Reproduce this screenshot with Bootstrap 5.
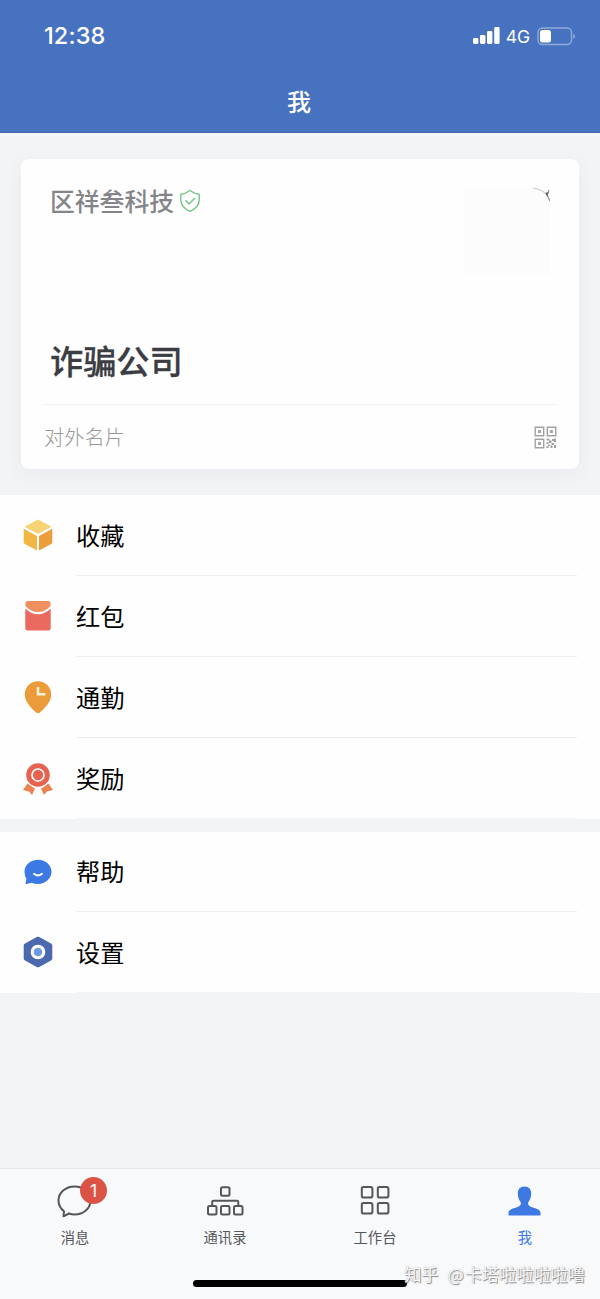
<!DOCTYPE html>
<html lang="zh-CN">
<head>
<meta charset="utf-8">
<meta name="viewport" content="width=device-width, initial-scale=1">
<title>我</title>
<link href="https://cdn.jsdelivr.net/npm/bootstrap@5.3.0/dist/css/bootstrap.min.css" rel="stylesheet">
<style>
body{font-family:"Noto Sans CJK SC",sans-serif;background:#f3f4f6;color:#000;line-height:1;width:600px}
svg{display:block;flex:none}
.screen{height:1299px}
.topbar{height:133px;background:#4772bf;color:#fff;border-bottom:1px solid #3f68b4}
.status{height:72px;padding:0 24px 0 44px}
.clock{font:500 23.5px/1 Inter,sans-serif;letter-spacing:.1px}
.carrier{font:400 17.5px/1 Inter,sans-serif;margin:1px 7px 0 6px}
.page-title{font-size:24px;font-weight:500;height:58px;padding-right:2px}
.profile{margin:26px 21px;height:310px;border:0;border-radius:8px;box-shadow:0 5px 20px rgba(60,80,110,.055);--bs-card-bg:#fefefe}
.profile-main{height:245px;padding:26px 29px 0 29px}
.company{font-size:24.8px;font-weight:500;color:#858589;line-height:30px}
.company svg{margin-top:2px}
.avatar{width:86px;height:87px;background:#fcfcfc;margin-top:2px}
.person{font-size:33.2px;font-weight:500;-webkit-text-stroke:.3px #3c3d43;color:#3c3d43;line-height:40px;padding-bottom:24px}
.visit{margin:0 22px;border-top:1px solid #f0f0f1;height:65px;color:#98989a;font-size:20.2px}
.visit span{padding-left:1px;font-weight:300}
.menu .list-group-item{height:81px;padding:0;border:0;display:flex;align-items:stretch;background:#fefefe;color:#000}
.menu .ico{width:76px;padding:0 0 1px 20.5px;display:flex;align-items:center}
.menu .lbl{flex:1;margin-right:23px;border-bottom:1px solid #ededee;display:flex;align-items:center;font-size:24.2px}
.menu .list-group-item:last-child .lbl{border-color:#f3f4f5}
.menu .list-group-item.short{height:80px}
.menu .short .lbl{padding-bottom:1px}
.tabs{height:131px;background:#f8f9fb;border-top:1px solid #e6e7e9}
.tab{width:150px;color:#56575a;font-size:14.3px;padding-top:14px;gap:10px}
.tab.active{color:#3d78e3}
.count{left:80px;top:8px;width:27px;height:27px;background:#da5345;color:#fff;font:400 17.5px/27px Inter,sans-serif}
.home-bar{left:193px;bottom:12px;width:214px;height:7px;background:#000;border-radius:4px}
.watermark{right:15px;bottom:14px;font-size:17.2px;line-height:22px;word-spacing:5px;color:#f8f9fb;text-shadow:1px 1px 1px #888,0 0 1px #aaa;white-space:nowrap}
.watermark span{margin-right:1px}
</style>
</head>
<body>
<div class="screen d-flex flex-column">
<header class="topbar flex-shrink-0">
  <div class="status d-flex align-items-center justify-content-between">
    <span class="clock">12:38</span>
    <div class="d-flex align-items-center">
      <svg width="28" height="18" fill="#fff"><rect x="1" y="11" width="5.400" height="6" rx="1.4"/><rect x="8" y="8" width="5.400" height="9" rx="1.4"/><rect x="15" y="4" width="5.400" height="13" rx="1.4"/><rect x="22.200" y="0" width="5.400" height="17" rx="1.4"/></svg>
      <span class="carrier">4G</span>
      <svg width="39" height="19"><rect x="1" y="1" width="33.500" height="16.500" rx="4.5" fill="none" stroke="#91abd9" stroke-width="1.4"/><rect x="3" y="3" width="11" height="12.500" rx="2.5" fill="#fff"/><path d="M36.2 6.3q3.400 3 0 6z" fill="#91abd9"/></svg>
    </div>
  </div>
  <h1 class="page-title d-flex align-items-center justify-content-center m-0">我</h1>
</header>

<section class="card profile flex-shrink-0">
  <div class="profile-main d-flex justify-content-between">
    <div class="d-flex flex-column justify-content-between">
      <div class="company d-flex align-items-center">区祥叁科技
        <svg class="ms-1" width="24" height="24" viewBox="0 0 24 24" fill="none" stroke="#75c586" stroke-width="1.4" stroke-linejoin="round"><path d="M12 1.5Q16.8 5 21.2 5.2V11c0 5-4 9-9.2 11.3C6.8 20 2.8 16 2.8 11V5.2Q7.2 5 12 1.5z"/><path d="M7.5 11.2l3.6 3.7 5.8-6"/></svg>
      </div>
      <div class="person">诈骗公司</div>
    </div>
    <div class="avatar">
      <svg width="86" height="30" viewBox="0 0 86 30" fill="none"><path d="M69 1q7 1 12 5" stroke="#ccc" stroke-width="1.2"/><path d="M85 3q-1 3-2 5L86 14" stroke="#999" stroke-width="1.300"/><path d="M81 6l3.500-1-1 5z" fill="#666"/></svg>
    </div>
  </div>
  <div class="visit d-flex align-items-center justify-content-between">
    <span>对外名片</span>
    <svg width="23" height="23" viewBox="0 0 23 23" fill="none" stroke="#a2a2a2" stroke-width="1.4"><path d="M1.200 1.200h8.500v8.500h-8.500zM13.300 1.200h8.500v8.500h-8.500zM1.200 13.300h8.500v8.500h-8.500z"/><path fill="#a2a2a2" stroke="none" d="M4.100 4.100h2.800v2.800H4.100zM16.100 4.100h2.800v2.800h-2.800zM4.100 16.100h2.800v2.800H4.100zM12.500 12.500h3v2h-3zM15 14.500h2.500v2.500H15zM18 13h2v2h-2zM20 12.500h2V16h-2zM12.500 16h2v2h-2zM17.500 17h2.500v2h-2.500zM12.500 20h2v2h-2zM14 18.500h2V20h-2zM16.500 19.500h2V22h-2zM20 19h2v3h-2z"/></svg>
  </div>
</section>

<div class="list-group list-group-flush menu flex-shrink-0">
  <div class="list-group-item"><span class="ico"><svg width="34" height="34" viewBox="0 0 34 34"><path d="M17 1.500L30.500 8.800 17 16 3.500 8.800z" fill="#f6d374"/><path d="M2.700 10.700L16 17.900V32.500L3.800 26q-1.100-.6-1.100-1.900z" fill="#f1b643"/><path d="M31.300 10.700L18 17.900V32.500L30.200 26q1.100-.6 1.100-1.900z" fill="#eb9d3c"/></svg></span><span class="lbl">收藏</span></div>
  <div class="list-group-item"><span class="ico"><svg width="34" height="34" viewBox="0 0 34 34"><path d="M4.500 4.300Q4.500 2 6.800 2H27.200Q29.500 2 29.500 4.300V7Q24 13 17 13T4.500 7z" fill="#ef8f60"/><path d="M4.300 9.500Q10 15.300 17 15.300T29.700 9.500V29Q29.700 31.500 27.200 31.500H6.800Q4.300 31.500 4.300 29z" fill="#eb6a60"/></svg></span><span class="lbl">红包</span></div>
  <div class="list-group-item"><span class="ico"><svg width="34" height="34" viewBox="0 0 34 34"><path d="M17 1.200C9.500 1.200 3.800 7 3.800 14.200c0 8 6.500 13.800 11.200 18.200q2 1.500 4 0C23.700 28 30.200 22.200 30.200 14.200 30.200 7 24.500 1.200 17 1.200z" fill="#eb9b3a"/><path d="M17 7v7.300h7.300" fill="none" stroke="#fff4d7" stroke-width="2.500"/></svg></span><span class="lbl">通勤</span></div>
  <div class="list-group-item"><span class="ico"><svg width="34" height="34" viewBox="0 0 34 34"><path d="M6.500 22.500L14 27.800 11 34 8 30.500 2 29zM27.500 22.500L20 27.800 23 34 26 30.500 32 29z" fill="#ec8351"/><circle cx="17" cy="14" r="12.300" fill="#fff"/><circle cx="17" cy="14" r="11.800" fill="#e76250"/><circle cx="17" cy="14" r="6" fill="none" stroke="#fff" stroke-width="1.700"/></svg></span><span class="lbl">奖励</span></div>
</div>
<div class="list-group list-group-flush menu flex-shrink-0" style="margin-top:13px">
  <div class="list-group-item short"><span class="ico"><svg width="34" height="34" viewBox="0 0 34 34"><path d="M17 4.800c7.500 0 13.500 5.300 13.500 12S24.500 29 17 29q-3.700 0-6.500-1.300L5.600 29q-1.500.3-1-1.200l.8-4Q3.500 20.800 3.500 16.800c0-6.700 6-12 13.500-12z" fill="#3d79e5"/><path d="M13 18.800q4 3.300 8 0" fill="none" stroke="#fff" stroke-width="1.900" stroke-linecap="round"/></svg></span><span class="lbl">帮助</span></div>
  <div class="list-group-item"><span class="ico"><svg width="34" height="34" viewBox="0 0 34 34"><path d="M15.700 2q1.300-.7 2.600 0L30 8.500q1.300.7 1.300 2.100V23.400q0 1.400-1.300 2.100L18.300 32q-1.300.7-2.600 0L4 25.500q-1.300-.7-1.300-2.100V10.600Q2.700 9.200 4 8.500z" fill="#4c69af"/><circle cx="17" cy="17" r="5.800" fill="#6e9ae0" stroke="#fff" stroke-width="3"/></svg></span><span class="lbl">设置</span></div>
</div>

<nav class="tabs d-flex position-relative mt-auto flex-shrink-0">
  <a class="tab d-flex flex-column align-items-center text-decoration-none position-relative" href="#">
    <svg width="38" height="37" viewBox="0 0 38 37" fill="none" stroke="#55565a" stroke-width="2" stroke-linejoin="round"><path d="M18.500 3.500C9.500 3.500 2.500 9.800 2.500 17.500c0 4.600 2 8 5.500 10.800l-.5 5 5.500-2.800q2.500 1 5.500 1c9 0 16-6 16-14S27.500 3.500 18.500 3.500z"/></svg>
    <span>消息</span><span class="count position-absolute rounded-circle text-center">1</span>
  </a>
  <a class="tab d-flex flex-column align-items-center text-decoration-none" href="#">
    <svg width="38" height="37" viewBox="0 0 38 37" fill="none" stroke="#55565a" stroke-width="2"><rect x="15" y="4.200" width="8.500" height="8.500" rx="1.500"/><rect x="2" y="23" width="8.500" height="8.500" rx="1.500"/><rect x="15" y="23" width="8.500" height="8.500" rx="1.500"/><rect x="28" y="23" width="8.500" height="8.500" rx="1.500"/><path d="M6.200 22.500V19q0-1.300 1.300-1.300H31q1.300 0 1.300 1.300V22.500"/></svg>
    <span>通讯录</span>
  </a>
  <a class="tab d-flex flex-column align-items-center text-decoration-none" href="#">
    <svg width="38" height="37" viewBox="0 0 38 37" fill="none" stroke="#55565a" stroke-width="2"><rect x="5.800" y="4" width="10.600" height="10.600" rx="1.800"/><rect x="21.800" y="4" width="10.600" height="10.600" rx="1.800"/><rect x="5.800" y="20" width="10.600" height="10.600" rx="1.800"/><rect x="21.800" y="20" width="10.600" height="10.600" rx="1.800"/></svg>
    <span>工作台</span>
  </a>
  <a class="tab active d-flex flex-column align-items-center text-decoration-none" href="#">
    <svg width="38" height="37" viewBox="0 0 38 37"><path d="M18.500 3.500c-4.500 0-7 3-6.700 7.500.2 3.700 1.500 6.300 3 8.200.5 2.600-.7 4-3.300 4.800C6 25.800 2.500 26.700 2.500 30v2.500h32V30c0-3.300-3.500-4.200-9-6-2.600-.8-3.800-2.200-3.300-4.800 1.500-1.900 2.800-4.500 3-8.200.3-4.500-2.200-7.500-6.700-7.500z" fill="#3d78e3"/></svg>
    <span>我</span>
  </a>
  <div class="home-bar position-absolute"></div>
  <div class="watermark position-absolute">知乎 <span>@</span>卡塔啦啦啦啦噜</div>
</nav>
</div>
<script src="https://cdn.jsdelivr.net/npm/bootstrap@5.3.0/dist/js/bootstrap.bundle.min.js"></script>
</body>
</html>
